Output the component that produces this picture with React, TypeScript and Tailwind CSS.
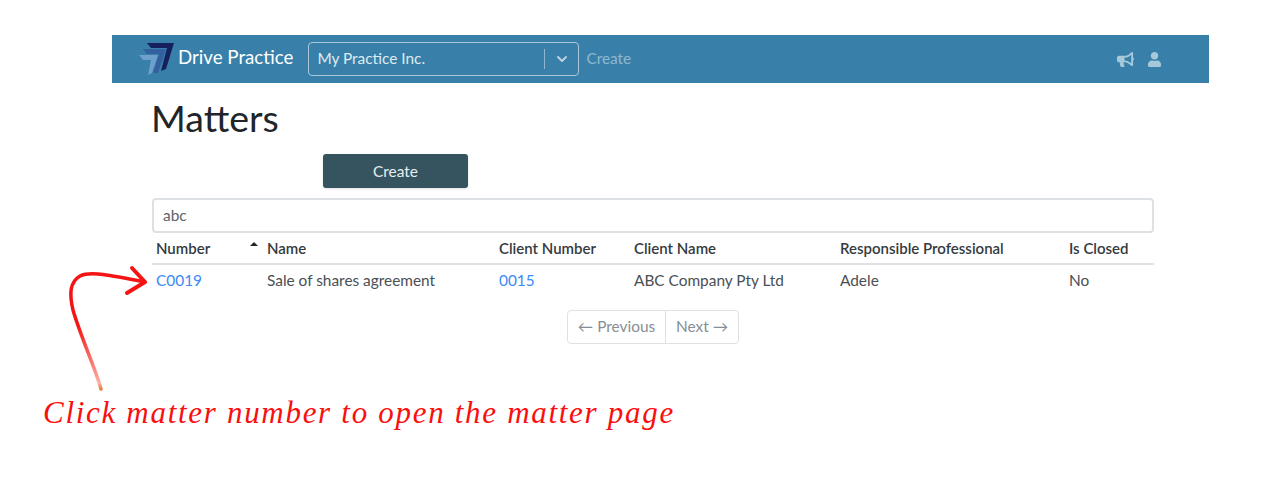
import React from 'react';
import { ChevronDown } from 'lucide-react';
import { FaBullhorn, FaUser } from 'react-icons/fa';

const columns = [
  { label: 'Number', width: 'w-[111px]' },
  { label: 'Name', width: 'w-[232px]' },
  { label: 'Client Number', width: 'w-[135px]' },
  { label: 'Client Name', width: 'w-[206px]' },
  { label: 'Responsible Professional', width: 'w-[229px]' },
  { label: 'Is Closed', width: 'w-[89px]' },
];

const Logo = () => (
  <svg width="38" height="34" viewBox="0 0 38 34" className="shrink-0">
    <polygon points="1,13 20,13 14,31 10,33 13,18 5,18" fill="#6f9fcb" />
    <polygon points="5,7 28,7 20,31 15,31 21,12 9,12" fill="#33609f" />
    <polygon points="9,1 36,1 28,27 23,29 29,6 13,6" fill="#16205c" />
  </svg>
);

const App = () => {
  return (
    <div className="relative h-[481px] w-[1267px] overflow-hidden bg-white pt-[35px] pl-[112px] font-['Lato',sans-serif] text-[15.4px] text-[#4a4f54]">
      <nav className="flex h-[48px] w-[1097px] items-center bg-[#3880a9] pl-[26px]">
        <Logo />
        <span className="ml-[2px] -translate-y-[2px] text-[18.7px] text-white">Drive Practice</span>
        <div className="ml-[15px] flex h-[34px] w-[271px] items-center rounded border border-[#a9c8d9] pl-[8px] text-[#dfeaf1]">
          <span className="flex-1">My Practice Inc.</span>
          <span className="h-[20px] w-px bg-[#8fb6cc]" />
          <span className="flex w-[33px] justify-center">
            <ChevronDown size={16} strokeWidth={3} className="text-[#b9d2e0]" />
          </span>
        </div>
        <a className="ml-[7px] text-[#8fb8cf]">Create</a>
        <div className="mr-[47px] ml-auto flex items-center gap-[13px] text-[#a5c8da]">
          <FaBullhorn size={17} />
          <FaUser size={15} />
        </div>
      </nav>

      <main className="ml-[40px] w-[1002px]">
        <h1 className="mt-[12px] -ml-[1px] text-[37.5px] leading-[46px] text-[#212529]">Matters</h1>
        <button className="mt-[13px] ml-[171px] block h-[34px] w-[145px] rounded-[3px] bg-[#35545f] pt-[1px] text-[#e8eef0] shadow-sm">
          Create
        </button>
        <div className="mt-[10px] flex h-[35px] items-center rounded border-2 border-[#dde1e5] pl-[9px] text-[#5d6368]">
          abc
        </div>
        <div className="flex h-[32px] items-center border-b-2 border-[#dee2e6] pt-[1px] text-[15px] text-[#343a40]">
          {columns.map((col, i) => (
            <div key={col.label} className={`${col.width} relative pl-[4px] font-semibold`}>
              {col.label}
              {i === 0 && (
                <span className="absolute top-[5px] right-[5px] h-0 w-0 border-x-[4px] border-b-[4px] border-x-transparent border-b-[#212529]" />
              )}
            </div>
          ))}
        </div>
        <div className="flex h-[32px] items-center pb-[1px]">
          <div className="w-[111px] pl-[4px] text-[#3b8af5]">C0019</div>
          <div className="w-[232px] pl-[4px]">Sale of shares agreement</div>
          <div className="w-[135px] pl-[4px] text-[#3b8af5]">0015</div>
          <div className="w-[206px] pl-[4px]">ABC Company Pty Ltd</div>
          <div className="w-[229px] pl-[4px]">Adele</div>
          <div className="w-[89px] pl-[4px]">No</div>
        </div>
        <div className="mt-[13px] flex justify-center text-[#868e96]">
          <div className="flex h-[34px] items-center rounded border border-[#dee2e6]">
            <span className="flex h-full w-[98px] items-center justify-center border-r border-[#dee2e6]">← Previous</span>
            <span className="flex h-full w-[72px] items-center justify-center">Next →</span>
          </div>
        </div>
      </main>

      <p className="mt-[51px] ml-[-69px] font-['Liberation_Serif',serif] text-[31px] leading-[36px] tracking-[1.7px] whitespace-nowrap text-[#fa0f0f] italic">
        Click matter number to open the matter page
      </p>

      {/* hand drawn arrow */}
      <svg className="absolute top-[265px] left-[60px]" width="100" height="130" viewBox="0 0 100 130">
        <defs>
          <linearGradient id="fade" x1="0" y1="0" x2="0" y2="1">
            <stop offset="0.45" stopColor="#f51414" />
            <stop offset="0.95" stopColor="#ffb0a8" />
            <stop offset="1" stopColor="#e8803a" />
          </linearGradient>
        </defs>
        <path d="M41 124 C36 105 20 70 13 45 C9 28 10 17 20 11 C30 6 50 10 85 17" fill="none" stroke="url(#fade)" strokeWidth="3.5" strokeLinecap="round" />
        <path d="M72 3 L85 17 L67 28" fill="none" stroke="#f51414" strokeWidth="4" strokeLinecap="round" strokeLinejoin="round" />
      </svg>
    </div>
  );
};

export default App;
